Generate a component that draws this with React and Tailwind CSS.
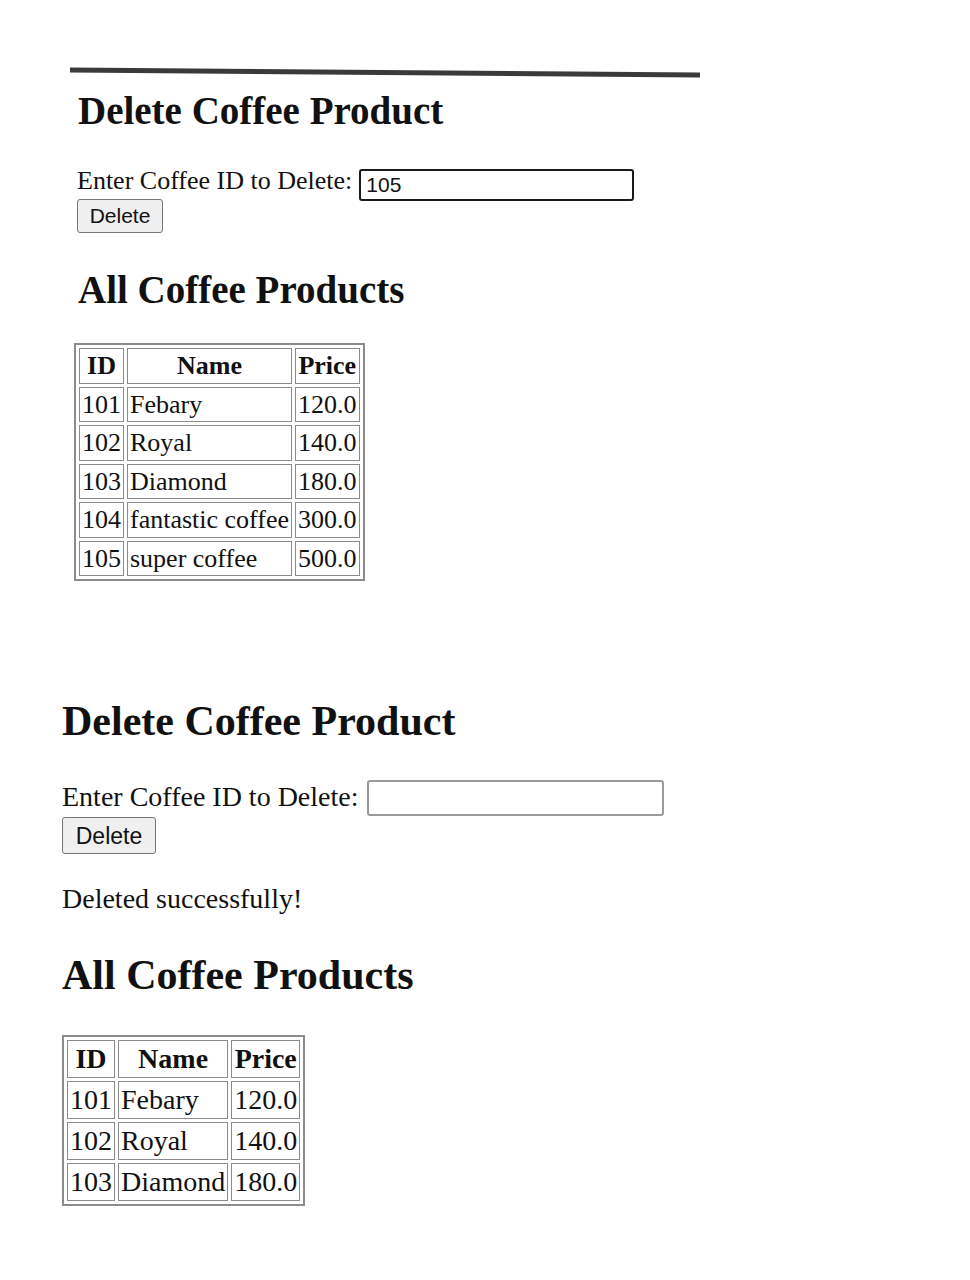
const topRows = [
  ["101", "Febary", "120.0"],
  ["102", "Royal", "140.0"],
  ["103", "Diamond", "180.0"],
  ["104", "fantastic coffee", "300.0"],
  ["105", "super coffee", "500.0"],
];

const bottomRows = topRows.slice(0, 3);

const topStyle = {
  table:
    "ml-[74px] mt-[31px] border-separate border-spacing-[3px] border-2 border-[#8c8c8c] text-[26px]",
  th: "border border-[#8c8c8c] px-[2px] py-px leading-[31.5px] font-bold text-center",
  td: "border border-[#8c8c8c] px-[2px] py-px leading-[31.5px] text-left font-normal",
};

const bottomStyle = {
  table:
    "ml-[62px] mt-[36px] border-separate border-spacing-x-[3px] border-spacing-y-[3px] border-2 border-[#8c8c8c] text-[28px]",
  th: "border border-[#8c8c8c] px-[2px] py-px leading-[34px] font-bold text-center",
  td: "border border-[#8c8c8c] px-[2px] py-px leading-[34px] text-left font-normal",
};

function CoffeeTable({ rows, s }) {
  return (
    <table className={s.table}>
      <thead>
        <tr>
          {["ID", "Name", "Price"].map((h) => (
            <th key={h} className={s.th}>
              {h}
            </th>
          ))}
        </tr>
      </thead>
      <tbody>
        {rows.map((r) => (
          <tr key={r[0]}>
            {r.map((c, i) => (
              <td key={i} className={s.td}>
                {c}
              </td>
            ))}
          </tr>
        ))}
      </tbody>
    </table>
  );
}

export default function App() {
  return (
    <div className="min-h-[1280px] bg-white text-[#111] font-['Liberation_Serif','Times_New_Roman',serif] overflow-hidden">
      {/* first capture */}
      <div className="pt-[70px]">
        <div className="ml-[70px] w-[630px] h-[5px] bg-[#3a3a3a] rotate-[0.45deg]"></div>
        <h2 className="ml-[78px] mt-[13px] text-[39px] leading-[45px] font-bold">
          Delete Coffee Product
        </h2>
        <div className="flex items-start ml-[77px] mt-[32px] text-[26px] leading-[32px]">
          <span>Enter Coffee ID to Delete:</span>
          <input
            defaultValue="105"
            className="mt-[4px] ml-[7px] w-[275px] h-[32px] border-2 border-[#1a1a1a] rounded-[3px] px-[5px] bg-white text-[21px] leading-[28px] text-[#111] font-['Liberation_Sans',Arial,sans-serif] outline-none"
          />
        </div>
        <button className="block ml-[77px] -mt-[2px] h-[34px] w-[86px] bg-[#efefef] border border-[#767676] rounded-[3px] text-[21px] leading-[30px] text-[#111] font-['Liberation_Sans',Arial,sans-serif]">
          Delete
        </button>
        <h2 className="ml-[78px] mt-[34px] text-[39px] leading-[45px] font-bold">
          All Coffee Products
        </h2>
        <CoffeeTable rows={topRows} s={topStyle} />
      </div>

      {/* second capture */}
      <div className="mt-[116px]">
        <h2 className="ml-[62px] text-[42px] leading-[48px] font-bold">
          Delete Coffee Product
        </h2>
        <div className="flex items-start ml-[62px] mt-[34px] text-[28px] leading-[36px]">
          <span>Enter Coffee ID to Delete:</span>
          <input className="mt-[1px] ml-[9px] w-[297px] h-[36px] border-2 border-[#9a9a9a] rounded-[3px] px-[5px] bg-white text-[23px] font-['Liberation_Sans',Arial,sans-serif] outline-none" />
        </div>
        <button className="block ml-[62px] mt-[1px] h-[37px] w-[94px] bg-[#efefef] border border-[#767676] rounded-[3px] text-[23px] leading-[32px] text-[#111] font-['Liberation_Sans',Arial,sans-serif]">
          Delete
        </button>
        <p className="ml-[62px] mt-[27px] text-[28px] leading-[36px]">
          Deleted successfully!
        </p>
        <h2 className="ml-[62px] mt-[34px] text-[42px] leading-[48px] font-bold">
          All Coffee Products
        </h2>
        <CoffeeTable rows={bottomRows} s={bottomStyle} />
      </div>
    </div>
  );
}
